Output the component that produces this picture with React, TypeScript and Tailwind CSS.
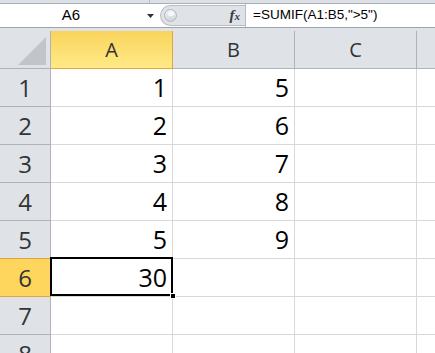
import React from "react"

const colA = ["1", "2", "3", "4", "5", "30", "", ""]
const colB = ["5", "6", "7", "8", "9", "", "", ""]

const cellFont = { fontFamily: '"Open Sans", "Liberation Sans", sans-serif' }

export default function App() {
  return (
    <div className="w-[435px] h-[353px] overflow-hidden bg-white" style={cellFont}>
      {/* ribbon bottom edge */}
      <div className="h-[4px] bg-[#dde1e6] border-b border-[#a9afb8] flex">
        <div className="w-[150px] border-r border-[#b6bcc4]" />
      </div>

      {/* formula bar */}
      <div className="h-[23px] flex items-center bg-white">
        <div className="w-[156px] h-full flex items-center relative">
          <span
            className="w-[142px] text-center text-[15px] text-black"
            style={{ fontFamily: '"Liberation Sans", sans-serif' }}
          >
            A6
          </span>
          <svg className="absolute left-[147px] top-[10px]" width="7" height="4" viewBox="0 0 7 4">
            <path d="M0 0H7L3.5 4Z" fill="#333" />
          </svg>
        </div>
        <div className="w-[4px]" />
        <div className="w-[85px] h-[21px] rounded-l-full bg-[#dfe3e8] border border-r-0 border-[#b7bcc3] flex items-center relative">
          <div className="ml-[3px] w-[13px] h-[13px] rounded-full bg-gradient-to-b from-[#f4f5f7] to-[#cfd3d8] border border-[#b3b8be] flex items-center justify-center">
            <div className="w-[6px] h-[4px] rounded-full bg-white/80 -mt-[3px]" />
          </div>
          <span
            className="absolute right-[5px] top-[0px] text-[15px] italic font-bold text-[#3a3a3a] leading-[19px]"
            style={{ fontFamily: '"Liberation Serif", serif' }}
          >
            f<span className="text-[11px]">x</span>
          </span>
        </div>
        <div className="w-px h-full bg-[#b7bcc3]" />
        <span
          className="ml-[7px] text-[13.5px] text-black"
          style={{ fontFamily: '"Liberation Sans", sans-serif' }}
        >
          =SUMIF(A1:B5,"&gt;5")
        </span>
      </div>
      <div className="h-px bg-[#9da3ab]" />
      <div className="h-[3px] bg-[#dfe3e8]" />

      {/* sheet grid */}
      <div className="relative grid grid-cols-[51px_122px_122px_122px_1fr] auto-rows-[38px]">
        <div className="bg-[#dfe3e8] border-r border-b border-[#aeb3b9] relative">
          <svg className="absolute left-[18px] top-[6px]" width="29" height="29" viewBox="0 0 29 29">
            <path d="M28 0V28H0Z" fill="#c1c5ca" />
          </svg>
        </div>
        <div className="bg-gradient-to-b from-[#f9d45c] to-[#ffea86] border-r border-b border-[#e2a43f] flex items-center justify-center text-[20px] text-[#333]">
          A
        </div>
        <div className="bg-[#dfe3e8] border-r border-b border-[#aeb3b9] flex items-center justify-center text-[20px] text-[#333]">
          B
        </div>
        <div className="bg-[#dfe3e8] border-r border-b border-[#aeb3b9] flex items-center justify-center text-[20px] text-[#333]">
          C
        </div>
        <div className="bg-[#dfe3e8] border-b border-[#aeb3b9]" />

        {colA.map((a, i) => {
          const selected = i === 5
          return (
            <React.Fragment key={i}>
              <div
                className={
                  selected
                    ? "bg-[#ffd65d] border-r border-b border-t border-[#e2a43f] -mt-px flex items-center justify-center text-[24px] text-[#333]"
                    : "bg-[#dfe3e8] border-r border-b border-[#aeb3b9] flex items-center justify-center text-[24px] text-[#333]"
                }
              >
                {i + 1}
              </div>
              <div className="border-r border-b border-[#d8d8d8] flex items-center justify-end pr-[5px] text-[25px] text-black">
                {a}
              </div>
              <div className="border-r border-b border-[#d8d8d8] flex items-center justify-end pr-[5px] text-[25px] text-black">
                {colB[i]}
              </div>
              <div className="border-r border-b border-[#d8d8d8]" />
              <div className="border-b border-[#d8d8d8]" />
            </React.Fragment>
          )
        })}

        {/* active cell A6 */}
        <div className="absolute left-[50px] top-[226px] w-[123px] h-[39px] border-2 border-black pointer-events-none" />
        <div className="absolute left-[170px] top-[262px] w-[6px] h-[6px] bg-black border border-white" />
      </div>
    </div>
  )
}
